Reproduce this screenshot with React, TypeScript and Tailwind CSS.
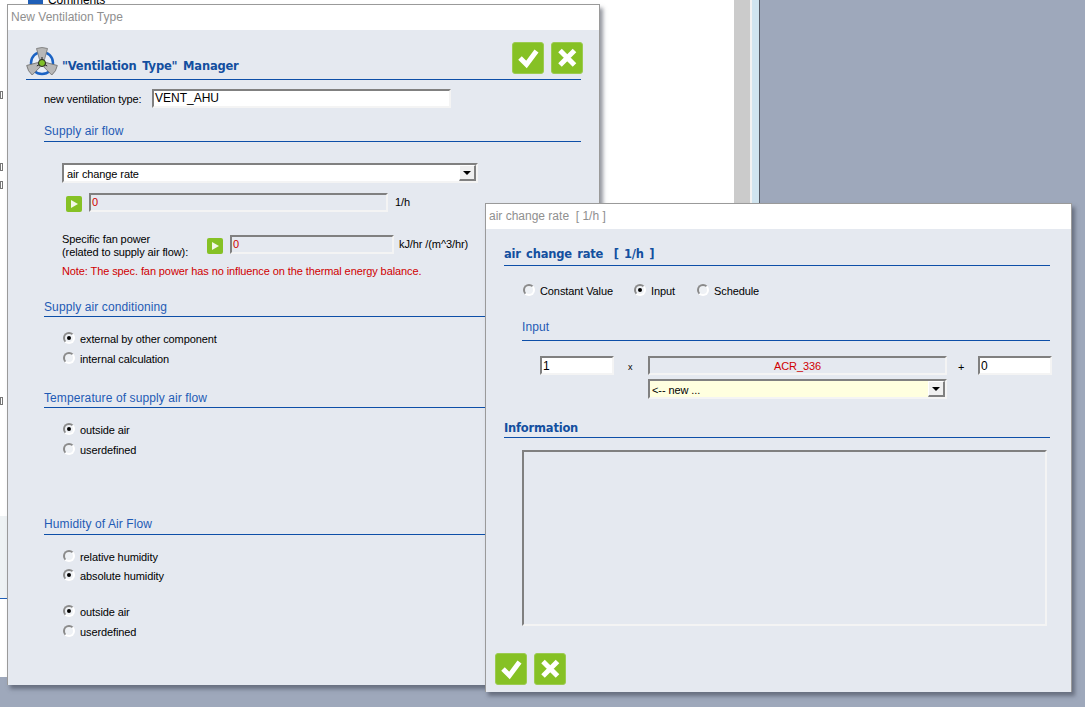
const Sunken = ({ className = "", children }: { className?: string; children?: React.ReactNode }) => (
  <div className={`flex items-center border-2 border-t-[#808080] border-l-[#808080] border-r-[#f4f4f4] border-b-[#f4f4f4] overflow-hidden ${className}`}>
    {children}
  </div>
);

const Arrow = () => (
  <div className="ml-auto w-[17px] h-[16px] flex items-center justify-center bg-[#f0f0f0] border-r-2 border-b-2 border-[#808080] border-t border-l border-t-white border-l-white">
    <div className="w-0 h-0 border-x-[4px] border-x-transparent border-t-[4px] border-t-black" />
  </div>
);

const Radio = ({ label, on = false, className = "" }: { label: string; on?: boolean; className?: string }) => (
  <div className={`flex items-center h-[14px] ${className}`}>
    <div className="w-[12px] h-[12px] rounded-full flex items-center justify-center border-2 border-t-[#8a8a8a] border-l-[#8a8a8a] border-r-white border-b-white bg-[#eef1f5]">
      {on && <div className="w-[4px] h-[4px] rounded-full bg-black" />}
    </div>
    <span className="ml-[5px] pt-[2px]">{label}</span>
  </div>
);

const Heading = ({ text, className = "" }: { text: string; className?: string }) => (
  <div className={`border-b border-[#0d4fa8] text-[#1f5bb5] text-[12px] tracking-[0.1px] ${className}`}>
    {text}
  </div>
);

const GreenButton = ({ kind }: { kind: "ok" | "cancel" }) => (
  <div className="w-[32px] h-[32px] rounded-[3px] bg-[#86c125] border border-[#9ccb50] flex items-center justify-center">
    <svg width="26" height="26" viewBox="0 0 26 26" fill="none" stroke="white" strokeWidth="5">
      {kind === "ok" ? <path d="M5 13 L11.5 19.5 L21.5 6" /> : <path d="M6 5.5 L20.5 20 M20.5 5.5 L6 20" />}
    </svg>
  </div>
);

const PlayButton = () => (
  <div className="w-[16px] h-[16px] rounded-[2px] bg-[#86c125] flex items-center justify-center shrink-0">
    <div className="w-0 h-0 ml-px border-y-[4.5px] border-y-transparent border-l-[7px] border-l-[#f4f8e8]" />
  </div>
);

const FanIcon = () => (
  <svg width="32" height="32" viewBox="0 0 32 32" className="shrink-0">
    <circle cx="16" cy="16" r="11" fill="#e8eef8" stroke="#1b63c4" strokeWidth="2.5" />
    <g fill="#b7b7b7" stroke="#737373" strokeWidth="0.8">
      <path d="M13.5 12.5 L10.5 1.5 Q16 -0.5 21.5 1.5 L18.5 12.5 Z" />
      <path d="M13.5 12.5 L10.5 1.5 Q16 -0.5 21.5 1.5 L18.5 12.5 Z" transform="rotate(120 16 16)" />
      <path d="M13.5 12.5 L10.5 1.5 Q16 -0.5 21.5 1.5 L18.5 12.5 Z" transform="rotate(240 16 16)" />
    </g>
    <path d="M16 16 L16 10 M16 16 L10.8 19 M16 16 L21.2 19" stroke="#222" strokeWidth="1" />
    <circle cx="16" cy="16" r="3.5" fill="#7fbf2a" stroke="#222" strokeWidth="1" />
  </svg>
);

const App = () => {
  return (
    <div className="relative w-[1085px] h-[707px] overflow-hidden bg-[#9ea8bb] text-[11px] leading-[13px] tracking-[-0.1px] text-black font-['Liberation_Sans',Arial,sans-serif]">
      {/* application behind the dialogs */}
      <div className="absolute left-0 top-0 w-[760px] h-[677px] flex bg-white">
        <div className="flex-1" />
        <div className="w-[16px] bg-[#cbcbcb]" />
        <div className="w-[2px] bg-[#f2f2f2]" />
        <div className="w-[7px] bg-[#d0e4ef]" />
        <div className="w-[1px] bg-[#555b66]" />
      </div>
      <div className="absolute left-[28px] top-[-6px] flex items-center gap-[5px] text-[12px]">
        <div className="w-[15px] h-[13px] bg-[#1f5fb8]" />
        <span>Comments</span>
      </div>
      <div className="absolute left-0 top-[516px] w-[7px] h-[83px] bg-[#eef2f4] border-b border-[#1f5fb8]" />
      <div className="absolute left-0 top-[91px] w-[3px] h-[8px] border border-[#777]" />
      <div className="absolute left-0 top-[163px] w-[3px] h-[8px] border border-[#777]" />
      <div className="absolute left-0 top-[181px] w-[3px] h-[8px] border border-[#777]" />
      <div className="absolute left-0 top-[397px] w-[3px] h-[8px] border border-[#777]" />

      {/* New Ventilation Type */}
      <div className="absolute left-[7px] top-[4px] w-[593px] h-[681px] bg-[#e5e9f0] border border-[#9a9a9a] border-b-0 shadow-[3px_4px_4px_rgba(60,65,80,0.55)] flex flex-col">
        <div className="h-[25px] bg-white pl-[3px] pt-[6px] text-[12px] tracking-normal text-[#8f8f8f]">New Ventilation Type</div>
        <div className="flex flex-col pl-[18px] pr-[18px]">
          <div className="mt-[12px] h-[38px] flex items-start border-b border-[#0d4fa8]">
            <div className="mt-[5px]"><FanIcon /></div>
            <div className="mt-[18px] ml-[4px] font-['DejaVu_Sans'] font-bold text-[11.5px] tracking-[-0.2px] [word-spacing:2px] text-[#134f9f]">"Ventilation Type" Manager</div>
            <div className="ml-auto mr-[-2px] flex gap-[7px]">
              <GreenButton kind="ok" />
              <GreenButton kind="cancel" />
            </div>
          </div>

          <div className="ml-[18px] mt-[9px] flex items-center h-[19px]">
            <span className="w-[108px] pt-[2px]">new ventilation type:</span>
            <Sunken className="w-[299px] h-[19px] bg-white text-[12px] pl-px tracking-normal">VENT_AHU</Sunken>
          </div>

          <Heading text="Supply air flow" className="h-[18px] pt-[1px] ml-[18px] mt-[16px]" />

          <Sunken className="ml-[36px] mt-[21px] w-[416px] h-[20px] bg-white pl-[3px]">
            <span className="pt-[2px]">air change rate</span>
            <Arrow />
          </Sunken>
          <div className="ml-[40px] mt-[10px] h-[19px] flex items-center">
            <div className="mt-[3px]"><PlayButton /></div>
            <Sunken className="ml-[7px] w-[299px] h-[19px] pl-px text-[#d00000]">0</Sunken>
            <span className="ml-[7px]">1/h</span>
          </div>

          <div className="ml-[36px] mt-[23px] h-[19px] flex items-center">
            <div className="w-[145px] mt-[3px]">
              Specific fan power
              <br />
              (related to supply air flow):
            </div>
            <div className="mt-[3px]"><PlayButton /></div>
            <Sunken className="ml-[7px] w-[164px] h-[19px] pl-px text-[#d00000]">0</Sunken>
            <span className="ml-[5px]">kJ/hr /(m^3/hr)</span>
          </div>
          <div className="ml-[36px] mt-[11px] text-[#d00000]">Note: The spec. fan power has no influence on the thermal energy balance.</div>

          <Heading text="Supply air conditioning" className="h-[18px] pt-[2px] ml-[18px] mt-[21px]" />
          <Radio label="external by other component" on className="ml-[37px] mt-[14px]" />
          <Radio label="internal calculation" className="ml-[37px] mt-[6px]" />

          <Heading text="Temperature of supply air flow" className="h-[18px] pt-[2px] ml-[18px] mt-[25px]" />
          <Radio label="outside air" on className="ml-[37px] mt-[14px]" />
          <Radio label="userdefined" className="ml-[37px] mt-[6px]" />

          <Heading text="Humidity of Air Flow" className="h-[18px] pt-[1px] ml-[18px] mt-[61px]" />
          <Radio label="relative humidity" className="ml-[37px] mt-[14px]" />
          <Radio label="absolute humidity" on className="ml-[37px] mt-[5px]" />
          <Radio label="outside air" on className="ml-[37px] mt-[22px]" />
          <Radio label="userdefined" className="ml-[37px] mt-[6px]" />
        </div>
      </div>

      {/* air change rate */}
      <div className="absolute left-[485px] top-[203px] w-[587px] h-[489px] bg-[#e5e9f0] border border-[#9a9a9a] border-b-0 shadow-[3px_4px_4px_rgba(60,65,80,0.55)] flex flex-col">
        <div className="h-[25px] bg-white pl-[3px] pt-[6px] text-[12px] tracking-normal text-[#8f8f8f]">air change rate&nbsp; [ 1/h ]</div>
        <div className="flex flex-col pl-[18px] pr-[21px]">
          <div className="mt-[17px] h-[20px] pt-[2px] border-b border-[#0d4fa8] font-['DejaVu_Sans'] font-bold text-[11.5px] tracking-[-0.2px] [word-spacing:1.5px] text-[#134f9f]">air change rate&nbsp; [ 1/h ]</div>
          <div className="ml-[19px] mt-[17px] flex">
            <Radio label="Constant Value" className="w-[111px]" />
            <Radio label="Input" on className="w-[63px]" />
            <Radio label="Schedule" />
          </div>
          <Heading text="Input" className="h-[22px] pt-[2px] ml-[18px] mt-[22px]" />
          <div className="mt-[15px] ml-[36px] flex items-start w-[512px]">
            <Sunken className="w-[74px] h-[19px] bg-white text-[12px] pl-px"><span className="pt-[2px]">1</span></Sunken>
            <span className="w-[34px] mt-[5px] pl-[14px] text-[9px]">x</span>
            <div className="flex flex-col gap-[4px]">
              <Sunken className="w-[299px] h-[19px] justify-center text-[#d00000]"><span className="pt-[2px]">ACR_336</span></Sunken>
              <Sunken className="w-[299px] h-[20px] bg-[#ffffdf] pl-[2px]">
                <span className="pt-[2px]">&lt;-- new ...</span>
                <Arrow />
              </Sunken>
            </div>
            <span className="w-[31px] mt-[5px] pl-[11px]">+</span>
            <Sunken className="w-[74px] h-[19px] bg-white text-[12px] pl-px"><span className="pt-[2px]">0</span></Sunken>
          </div>
          <div className="mt-[21px] h-[18px] pt-[2px] border-b border-[#0d4fa8] font-['DejaVu_Sans'] font-bold text-[11.5px] tracking-[-0.2px] text-[#134f9f]">Information</div>
          <div className="ml-[18px] mt-[12px] w-[525px] h-[176px] border-2 border-t-[#808080] border-l-[#808080] border-r-[#f4f4f4] border-b-[#f4f4f4]" />
          <div className="mt-[27px] ml-[-9px] flex gap-[7px]">
            <GreenButton kind="ok" />
            <GreenButton kind="cancel" />
          </div>
        </div>
      </div>
    </div>
  );
};

export default App;
